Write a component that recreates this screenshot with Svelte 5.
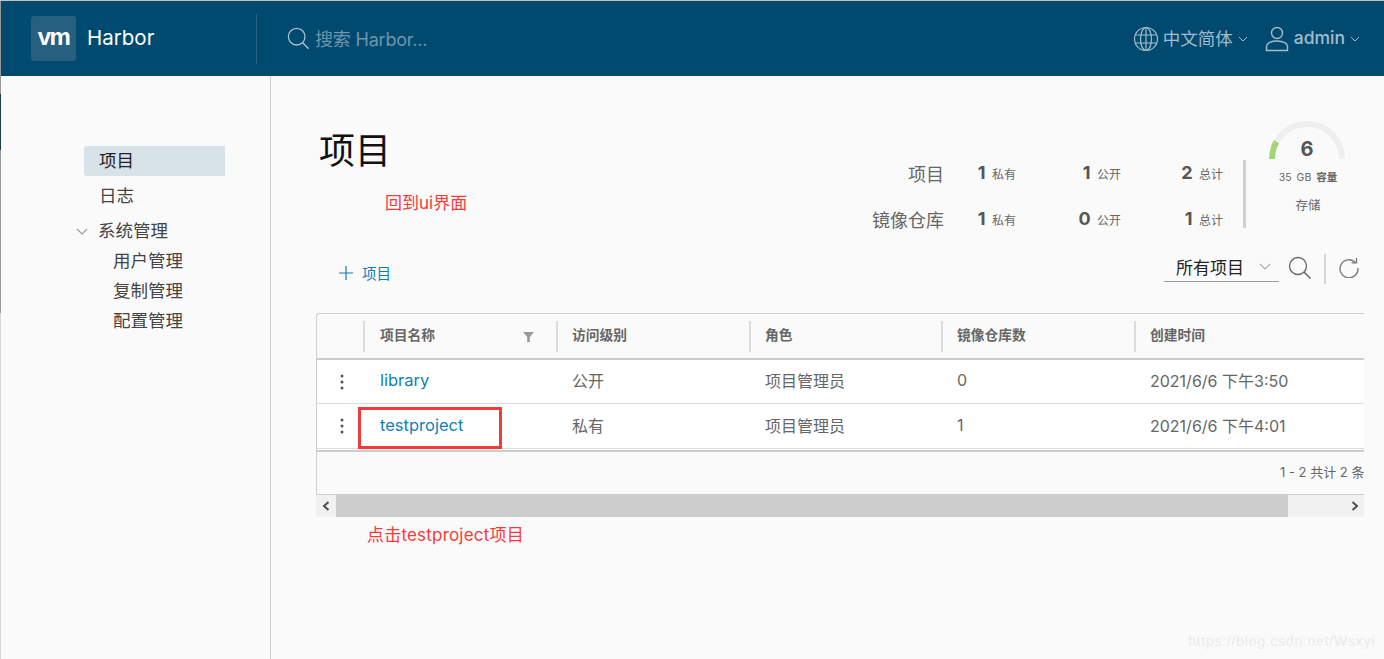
<script lang="ts">
  const columns = ['项目名称', '访问级别', '角色', '镜像仓库数', '创建时间'];

  const projects = [
    { name: 'library', access: '公开', role: '项目管理员', repos: 0, created: '2021/6/6 下午3:50' },
    { name: 'testproject', access: '私有', role: '项目管理员', repos: 1, created: '2021/6/6 下午4:01' }
  ];

  const stats = [
    { label: '项目', priv: 1, pub: 1, total: 2 },
    { label: '镜像仓库', priv: 1, pub: 0, total: 1 }
  ];
</script>

<div class="page">
  <header class="topbar">
    <div class="brand">
      <span class="logo">vm</span>
      <span class="brand-name">Harbor</span>
    </div>
    <div class="search">
      <svg class="search-icon" width="24" height="24" viewBox="0 0 26 26" fill="none">
        <circle cx="10.5" cy="10.5" r="9" stroke="#a9c2d0" stroke-width="1.4" />
        <path d="M17 17l6.5 6.5" stroke="#a9c2d0" stroke-width="1.6" />
      </svg>
      <span>搜索 Harbor...</span>
    </div>
    <div class="top-right">
      <svg width="26" height="26" viewBox="0 0 26 26" fill="none" stroke="#a3bdcc" stroke-width="1.2">
        <circle cx="13" cy="13" r="11.5" />
        <ellipse cx="13" cy="13" rx="5.5" ry="11.5" />
        <path d="M13 1.5v23M2.5 9h21M2.5 17h21" />
      </svg>
      <span class="lang">中文简体</span>
      <svg class="caret" width="10" height="6" viewBox="0 0 10 6" fill="none"><path d="M1 1l4 4 4-4" stroke="#a3bdcc" /></svg>
      <svg class="user" width="24" height="26" viewBox="0 0 24 26" fill="none" stroke="#a3bdcc" stroke-width="1.4">
        <circle cx="12" cy="7" r="5.5" />
        <path d="M1.5 24.5v-4c0-3 4-5.500 10.500-5.500s10.500 2.500 10.500 5.500v4z" />
      </svg>
      <span class="admin">admin</span>
      <svg class="caret" width="10" height="6" viewBox="0 0 10 6" fill="none"><path d="M1 1l4 4 4-4" stroke="#a3bdcc" /></svg>
    </div>
  </header>

  <div class="body">
    <nav class="sidebar">
      <a class="nav-item active">项目</a>
      <a class="nav-item">日志</a>
      <div class="nav-item group">
        <svg width="12" height="7" viewBox="0 0 12 7" fill="none"><path d="M1 1l5 5 5-5" stroke="#999" stroke-width="1.1" /></svg>
        系统管理
      </div>
      <a class="nav-item sub">用户管理</a>
      <a class="nav-item sub">复制管理</a>
      <a class="nav-item sub">配置管理</a>
    </nav>

    <main class="content">
      <section class="summary">
        <h1>项目</h1>
        <div class="stats">
          {#each stats as row}
            <div class="stat-row">
              <span class="stat-label">{row.label}</span>
              <span class="stat priv"><b>{row.priv}</b> 私有</span>
              <span class="stat pub"><b>{row.pub}</b> 公开</span>
              <span class="stat total"><b>{row.total}</b> 总计</span>
            </div>
          {/each}
        </div>
        <div class="storage">
          <svg class="gauge" width="78" height="40" viewBox="0 0 78 40" fill="none">
            <path d="M4 39a35 35 0 0 1 70 0" stroke="#eeeeee" stroke-width="6" />
            <path d="M4 39a35 35 0 0 1 4.500-17.200" stroke="#a5d477" stroke-width="6" />
          </svg>
          <span class="gauge-value">6</span>
          <span class="capacity">35 GB <b>容量</b></span>
          <span class="storage-label">存储</span>
        </div>
      </section>

      <section class="toolbar">
        <button class="add">
          <svg width="14" height="14" viewBox="0 0 14 14" fill="none"><path d="M7 0v14M0 7h14" stroke="#0d7fb5" stroke-width="1.2" /></svg>
          项目
        </button>
        <div class="tools">
          <div class="select">
            <span>所有项目</span>
            <svg width="12" height="7" viewBox="0 0 12 7" fill="none"><path d="M1 1l5 5 5-5" stroke="#aaa" stroke-width="1.1" /></svg>
          </div>
          <svg class="tool-search" width="24" height="24" viewBox="0 0 24 24" fill="none">
            <circle cx="10" cy="10" r="8.500" stroke="#666" stroke-width="1.300" />
            <path d="M16 16l6.500 6.500" stroke="#666" stroke-width="1.500" />
          </svg>
          <span class="tool-sep"></span>
          <svg class="refresh" width="20" height="20" viewBox="0 0 20 20" fill="none" stroke="#777" stroke-width="1.300">
            <path d="M16.500 4.500A9 9 0 1 0 19 10" />
            <path d="M12.500 4.800h5V0" />
          </svg>
        </div>
      </section>

      <section class="datagrid">
        <div class="grid-row head">
          <div class="cell action"></div>
          {#each columns as col, i}
            <div class="cell">
              <span>{col}</span>
              {#if i === 0}
                <svg class="filter" width="11" height="10" viewBox="0 0 11 10"><path d="M0 0h11L6.800 5v5H4.200V5z" fill="#999" /></svg>
              {/if}
            </div>
          {/each}
        </div>
        {#each projects as p}
          <div class="grid-row item">
            <div class="cell action">
              <svg width="4" height="16" viewBox="0 0 4 16" fill="#555">
                <circle cx="2" cy="2" r="1.500" /><circle cx="2" cy="8" r="1.500" /><circle cx="2" cy="14" r="1.500" />
              </svg>
            </div>
            <div class="cell"><a href="#/">{p.name}</a></div>
            <div class="cell">{p.access}</div>
            <div class="cell">{p.role}</div>
            <div class="cell">{p.repos}</div>
            <div class="cell">{p.created}</div>
          </div>
        {/each}
        <div class="grid-foot"><span>1 - 2 共计 2 条记录</span></div>
      </section>

      <div class="hscroll">
        <span class="arrow">
          <svg width="8" height="10" viewBox="0 0 8 10" fill="none"><path d="M6.500 1L2 5l4.500 4" stroke="#505050" stroke-width="2" /></svg>
        </span>
        <span class="thumb"></span>
        <span class="track">
          <svg width="8" height="10" viewBox="0 0 8 10" fill="none"><path d="M1.500 1L6 5 1.500 9" stroke="#505050" stroke-width="2" /></svg>
        </span>
      </div>
    </main>
  </div>

  <span class="note note-ui">回到ui界面</span>
  <span class="note note-click">点击testproject项目</span>
  <div class="mark"></div>
  <span class="watermark">https://blog.csdn.net/Wsxyi</span>
  <div class="edge"></div>
</div>

<style>
  :global(body) {
    margin: 0;
    background: #fafafa;
    font-family: Inter, "Noto Sans CJK SC", sans-serif;
  }

  .page {
    position: relative;
    width: 1384px;
    height: 659px;
    overflow: hidden;
    display: flex;
    flex-direction: column;
    background: #fafafa;
    color: #565656;
    border-top: 1px solid #c4c4c4;
    box-sizing: border-box;
  }

  .topbar {
    height: 75px;
    margin-left: 1px;
    flex: none;
    display: flex;
    align-items: center;
    background: #004a70;
    color: #fff;
  }

  .brand {
    width: 256px;
    height: 50px;
    padding-left: 30px;
    box-sizing: border-box;
    display: flex;
    align-items: center;
    gap: 11px;
    border-right: 1px solid #2a6482;
  }

  .logo {
    width: 45px;
    height: 45px;
    border-radius: 3px;
    background: #275f7e;
    font: bold 24px/42px "Liberation Sans", sans-serif;
    letter-spacing: -1.500px;
    text-align: center;
  }

  .brand-name {
    font-size: 20.500px;
    margin-top: -2px;
  }

  .search {
    margin-left: 30px;
    display: flex;
    align-items: center;
    gap: 4px;
    font-size: 18px;
    color: #6f95ab;
  }

  .search span {
    margin-top: -2px;
    letter-spacing: -0.2px;
  }

  .top-right {
    margin-left: auto;
    padding-right: 24px;
    display: flex;
    align-items: center;
    color: #a3bdcc;
    font-size: 17.500px;
  }

  .lang {
    margin-left: 4px;
    margin-top: -2px;
  }

  .caret {
    margin-left: 5px;
  }

  .user {
    margin-left: 17px;
  }

  .admin {
    margin-left: 5px;
    margin-top: -2px;
    font-weight: 500;
  }

  .body {
    flex: 1;
    display: flex;
    min-height: 0;
  }

  .sidebar {
    width: 270px;
    flex: none;
    padding-top: 70px;
    border-right: 1px solid #cfcfcf;
    display: flex;
    flex-direction: column;
  }

  .nav-item {
    height: 30px;
    line-height: 30px;
    margin: 0 45px 5px 84px;
    padding-left: 15px;
    font-size: 17.500px;
    color: #444;
    border-radius: 3px 0 0 3px;
  }

  .nav-item.active {
    background: #d8e3e9;
    color: #222;
  }

  .nav-item.group {
    position: relative;
    margin-bottom: 0;
    padding-left: 14px;
  }

  .nav-item.group svg {
    position: absolute;
    left: -8px;
    top: 12px;
  }

  .nav-item.sub {
    margin-bottom: 0;
    padding-left: 29px;
  }

  .content {
    flex: 1;
    min-width: 0;
    padding: 0 20px 0 45px;
  }

  .summary {
    height: 178px;
    display: flex;
    align-items: flex-start;
  }

  h1 {
    margin: 54px 0 0 3px;
    font-size: 36px;
    font-weight: 400;
    line-height: 42px;
    color: #111;
  }

  .stats {
    margin: 78px 0 0 auto;
    display: flex;
    flex-direction: column;
    gap: 10px;
  }

  .stat-row {
    height: 36px;
    display: flex;
    align-items: center;
    justify-content: flex-end;
  }

  .stat-label {
    margin-top: 2px;
    font-size: 18px;
    color: #666;
  }

  .stat {
    text-align: right;
    font-size: 12px;
    color: #666;
  }

  .stat b {
    margin-right: 3px;
    font-size: 18px;
    font-weight: 700;
    color: #565656;
  }

  .priv {
    width: 72px;
  }

  .pub {
    width: 105px;
  }

  .total {
    width: 102px;
  }

  .storage {
    position: relative;
    margin: 84px 14px 0 20px;
    width: 84px;
    padding: 0 0 0 20px;
    height: 68px;
    display: flex;
    flex-direction: column;
    align-items: center;
    border-left: 3px solid #d0d0d0;
  }

  .gauge {
    position: absolute;
    left: 22px;
    top: -40px;
  }

  .gauge-value {
    position: absolute;
    left: 22px;
    width: 78px;
    top: -23px;
    text-align: center;
    font-size: 20px;
    font-weight: 700;
    color: #555;
  }

  .capacity {
    margin-top: 9px;
    font-size: 10.500px;
    word-spacing: 2px;
    white-space: nowrap;
    color: #666;
  }

  .capacity b {
    font-weight: 700;
  }

  .storage-label {
    margin-top: 11px;
    font-size: 12.500px;
    color: #666;
  }

  .toolbar {
    height: 59px;
    display: flex;
    align-items: flex-start;
    justify-content: space-between;
  }

  .add {
    margin: 8px 0 0 23px;
    padding: 0;
    display: flex;
    align-items: center;
    gap: 9px;
    border: 0;
    background: none;
    font: 14.500px Inter, "Noto Sans CJK SC", sans-serif;
    color: #0d7fb5;
  }

  .tools {
    display: flex;
    align-items: flex-start;
    padding-right: 5px;
  }

  .select {
    width: 115px;
    height: 28px;
    box-sizing: border-box;
    padding: 0 8px 3px 12px;
    display: flex;
    align-items: center;
    justify-content: space-between;
    border-bottom: 1px solid #999;
    font-size: 17px;
    color: #222;
  }

  .tool-search {
    margin: 2px 0 0 9px;
  }

  .tool-sep {
    width: 2px;
    height: 30px;
    margin: 0 13px 0 12px;
    background: #d5d5d5;
  }

  .refresh {
    margin-top: 4px;
  }

  .datagrid {
    border: 1px solid #cfcfcf;
    border-right: 0;
    border-radius: 3px 0 0 0;
    overflow: hidden;
    background: #fafafa;
  }

  .grid-row {
    display: grid;
    grid-template-columns: 46px 193px 193px 192px 193px 260px;
  }

  .head {
    height: 44px;
    border-bottom: 2px solid #ccc;
    font-size: 13.750px;
    font-weight: 700;
    color: #666;
    align-items: center;
  }

  .head .cell {
    position: relative;
    height: 31px;
    display: flex;
    align-items: center;
    border-left: 2px solid #dcdcdc;
    padding-left: 14px;
  }

  .head .cell:nth-child(2) {
    padding-left: 15px;
  }

  .head .cell span {
    margin-top: -4px;
  }

  .head .cell.action {
    border-left: 0;
  }

  .filter {
    position: absolute;
    right: 22px;
    top: 11px;
  }

  .item {
    height: 44px;
    box-sizing: border-box;
    align-items: center;
    background: #fff;
    border-bottom: 1px solid #ddd;
    font-size: 16px;
    color: #666;
  }

  .item + .item {
    height: 45px;
  }

  .item .cell {
    padding-left: 16px;
    margin-top: -3px;
  }

  .item .cell:nth-child(2) {
    padding-left: 17px;
  }

  .item .cell.action {
    padding-left: 23px;
    display: flex;
    margin-top: 0;
  }

  .item a {
    font-size: 16.500px;
    color: #0f7fb4;
    text-decoration: none;
  }

  .grid-foot {
    height: 44px;
    box-sizing: border-box;
    margin-top: 1px;
    padding-left: 963px;
    border-top: 2px solid #ccc;
    white-space: nowrap;
    line-height: 41px;
    font-size: 13px;
    color: #666;
  }

  .hscroll {
    height: 22px;
    display: flex;
    background: #f1f1f1;
  }

  .arrow {
    width: 20px;
    display: flex;
    align-items: center;
    justify-content: center;
  }

  .thumb {
    width: 952px;
    background: #cdcdcd;
  }

  .track {
    flex: 1;
    display: flex;
    align-items: center;
    justify-content: flex-end;
    padding-right: 5px;
  }

  /* red annotations pasted on top of the screenshot */
  .note {
    position: absolute;
    font-size: 17px;
    line-height: 20px;
    color: #f83a3a;
  }

  .note-ui {
    left: 385px;
    top: 192px;
  }

  .note-click {
    left: 367px;
    top: 524px;
    letter-spacing: 0.2px;
  }

  .mark {
    position: absolute;
    left: 358px;
    top: 406px;
    width: 144px;
    height: 42px;
    box-sizing: border-box;
    border: 3px solid #f33b3b;
  }

  .watermark {
    position: absolute;
    right: 9px;
    bottom: 10px;
    font: 14px "Liberation Sans", sans-serif;
    letter-spacing: 0.75px;
    color: #ebebeb;
  }

  /* window edge left in the capture */
  .edge {
    position: absolute;
    left: 0;
    top: 0;
    width: 1px;
    height: 659px;
    background: linear-gradient(#999 0 93px, #1d3a4a 93px 149px, #999 149px 312px, #d8d8d8 312px);
  }
</style>
